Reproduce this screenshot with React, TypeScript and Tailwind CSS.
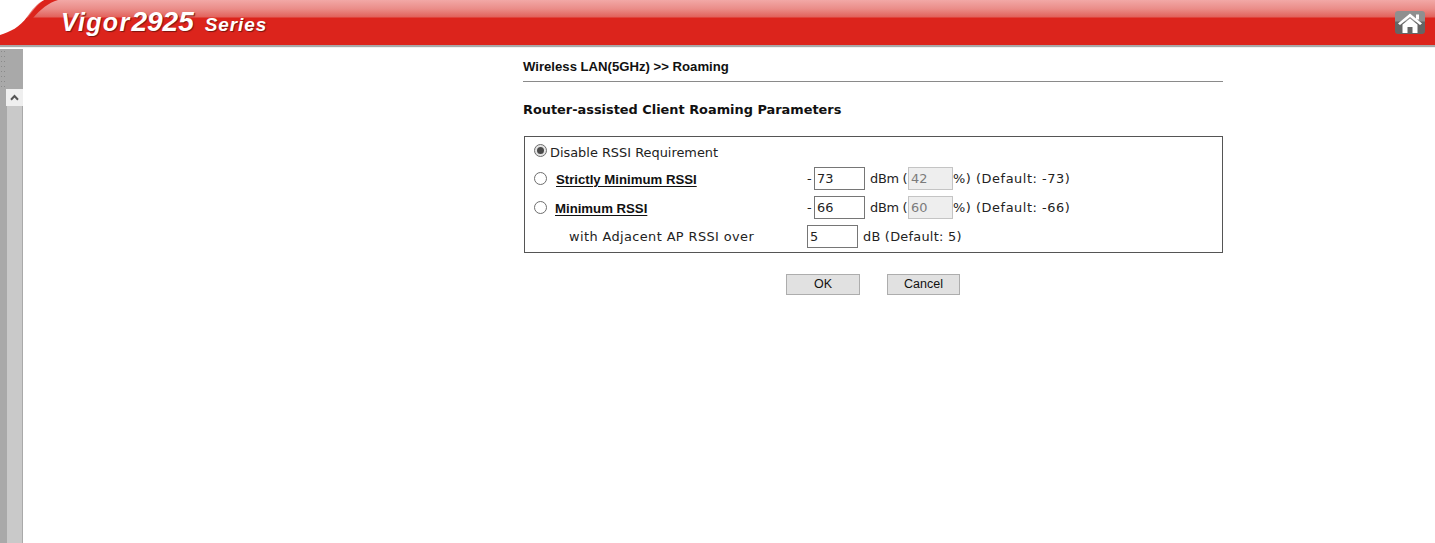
const verdana = "font-['DejaVu_Sans',sans-serif] text-[12.9px] text-[#222]";
const arial = "font-['Liberation_Sans',Arial,sans-serif] font-bold";

function Radio({ checked, lift }: { checked?: boolean; lift?: string }) {
  return (
    <span className={`w-[13px] h-[13px] rounded-full border border-[#6e6e6e] flex items-center justify-center shrink-0 ${lift ?? ""} ${checked ? "bg-[#e4e4e4]" : "bg-white"}`}>
      {checked && <span className="w-[7px] h-[7px] rounded-full bg-[#4a4a4a]" />}
    </span>
  );
}

function Box({ value, w, disabled }: { value: string; w: string; disabled?: boolean }) {
  return (
    <span
      className={`${w} h-[23px] border flex items-center pl-[2px] shrink-0 ${
        disabled ? "bg-[#eee] border-[#c4c4c4] text-[#7b7b7b]" : "bg-white border-[#767676] text-[#222]"
      }`}
    >
      {value}
    </span>
  );
}

function RssiRow({ label, labelPad, value, pct, def }: { label: string; labelPad: string; value: string; pct: string; def: string }) {
  return (
    <div className={`flex items-center h-[29px] pl-[9px] ${verdana}`}>
      <Radio />
      <span className={`w-[260px] shrink-0 ${labelPad} ${arial} text-[13.2px] text-[#111] underline underline-offset-2 mt-[2px]`}>{label}</span>
      <span className="w-[7px] shrink-0">-</span>
      <Box value={value} w="w-[51px]" />
      <span className="w-[43px] shrink-0 pl-[5px] whitespace-nowrap tracking-[-0.3px]">dBm (</span>
      <Box value={pct} w="w-[45px]" disabled />
      <span className="whitespace-pre tracking-[0.55px]">{`%) (Default: ${def})`}</span>
    </div>
  );
}

export default function App() {
  return (
    <div className="h-[543px] w-[1435px] overflow-hidden bg-white flex flex-col">
      <header className="relative h-[49px] shrink-0 bg-white">
        <div className="h-[45px] bg-[linear-gradient(to_bottom,#f2a8a6_0px,#ea8c88_9px,#e2625c_17px,#dc241c_18px,#dc241c_100%)] flex items-center justify-between pl-[61px] pr-[10px] shadow-[0_2px_1px_#a8a8a8]">
          <div className="flex items-baseline font-['Liberation_Sans',Arial,sans-serif] italic font-bold text-white [text-shadow:1px_1px_1px_#7a1510] relative z-10 mb-[1px]">
            <span className="text-[25px] tracking-[1.3px]">Vigor</span>
            <span className="text-[28px] ml-[1px]">2925</span>
            <span className="text-[19px] ml-[11px] tracking-[0.9px]">Series</span>
          </div>
          <div className="w-[30px] h-[23px] rounded-[3px] bg-[linear-gradient(to_bottom,#8f8f8f_0px,#8f8f8f_10px,#656565_11px,#656565_100%)] flex items-center justify-center relative z-10">
            <svg width="26" height="20" viewBox="0 0 26 20">
              <path d="M1 10.5 L13 0.5 L25 10.5 L23 12 L13 4 L3 12 Z" fill="#fff" />
              <path d="M5.5 11.5 L13 5.5 L20.5 11.5 V20 H15.5 V14 H10.5 V20 H5.5 Z" fill="#fff" />
              <rect x="19" y="1.5" width="3" height="5" fill="#fff" />
            </svg>
          </div>
        </div>
        <svg className="absolute left-0 top-0" width="70" height="38" viewBox="0 0 70 38">
          <path d="M44 0 H58 C48 3 41 9 33 18 L26 20 C32 12 37 4 44 0 Z" fill="#dc241c" />
          <path d="M0 0 H44 C36 4 32 10 27 17 C20 27 10 32 0 35 Z" fill="#fff" />
        </svg>
      </header>

      <div className="flex-1 flex min-h-0">
        <aside className="w-[23px] shrink-0 flex bg-[#a9a9a9]">
          <div className="w-[6px] shrink-0 flex flex-col">
            <div className="h-[40px] shrink-0 bg-[radial-gradient(circle,#8a8a8a_0.8px,transparent_1px)] bg-[length:3px_5px]" />
          </div>
          <div className="w-[17px] flex flex-col pt-[40px]">
            <div className="h-[17px] bg-[#efefef] flex items-center justify-center shrink-0">
              <svg width="9" height="7" viewBox="0 0 9 7">
                <path d="M1 5.8 L4.5 2 L8 5.8" fill="none" stroke="#555" strokeWidth="2" />
              </svg>
            </div>
            <div className="flex-1 bg-[#c9c9c9] mx-[1px]" />
          </div>
        </aside>

        <main className="flex-1 flex flex-col pl-[500px]">
          <div className="w-[700px]">
            <div className={`${arial} text-[13.15px] text-[#111] h-[33px] pt-[9px] border-b border-[#8a8a8a] leading-[18px]`}>
              Wireless LAN(5GHz) &gt;&gt; Roaming
            </div>
            <h1 className="font-['DejaVu_Sans',sans-serif] font-bold text-[12.9px] text-[#111] mt-[19px] leading-[18px]">
              Router-assisted Client Roaming Parameters
            </h1>
            <div className="mt-[17px] ml-[1px] h-[117px] border border-[#555] pt-[4px]">
              <div className={`flex items-center h-[23px] pl-[9px] ${verdana}`}>
                <Radio checked lift="mb-[4px]" />
                <span className="ml-[3px]">Disable RSSI Requirement</span>
              </div>
              <RssiRow label="Strictly Minimum RSSI" labelPad="pl-[9px]" value="73" pct="42" def="-73" />
              <RssiRow label="Minimum RSSI" labelPad="pl-[8px]" value="66" pct="60" def="-66" />
              <div className={`flex items-center h-[29px] ${verdana}`}>
                <span className="w-[282px] shrink-0 pl-[44px] tracking-[0.4px]">with Adjacent AP RSSI over</span>
                <Box value="5" w="w-[51px]" />
                <span className="ml-[5px] tracking-[0.25px]">dB (Default: 5)</span>
              </div>
            </div>
            <div className="flex mt-[21px] pl-[263px] gap-[27px] font-['Liberation_Sans',Arial,sans-serif] text-[12.5px] text-[#111]">
              <button className="w-[74px] h-[21px] bg-[#e1e1e1] border border-[#adadad]">OK</button>
              <button className="w-[73px] h-[21px] bg-[#e1e1e1] border border-[#adadad]">Cancel</button>
            </div>
          </div>
        </main>
      </div>
    </div>
  );
}
